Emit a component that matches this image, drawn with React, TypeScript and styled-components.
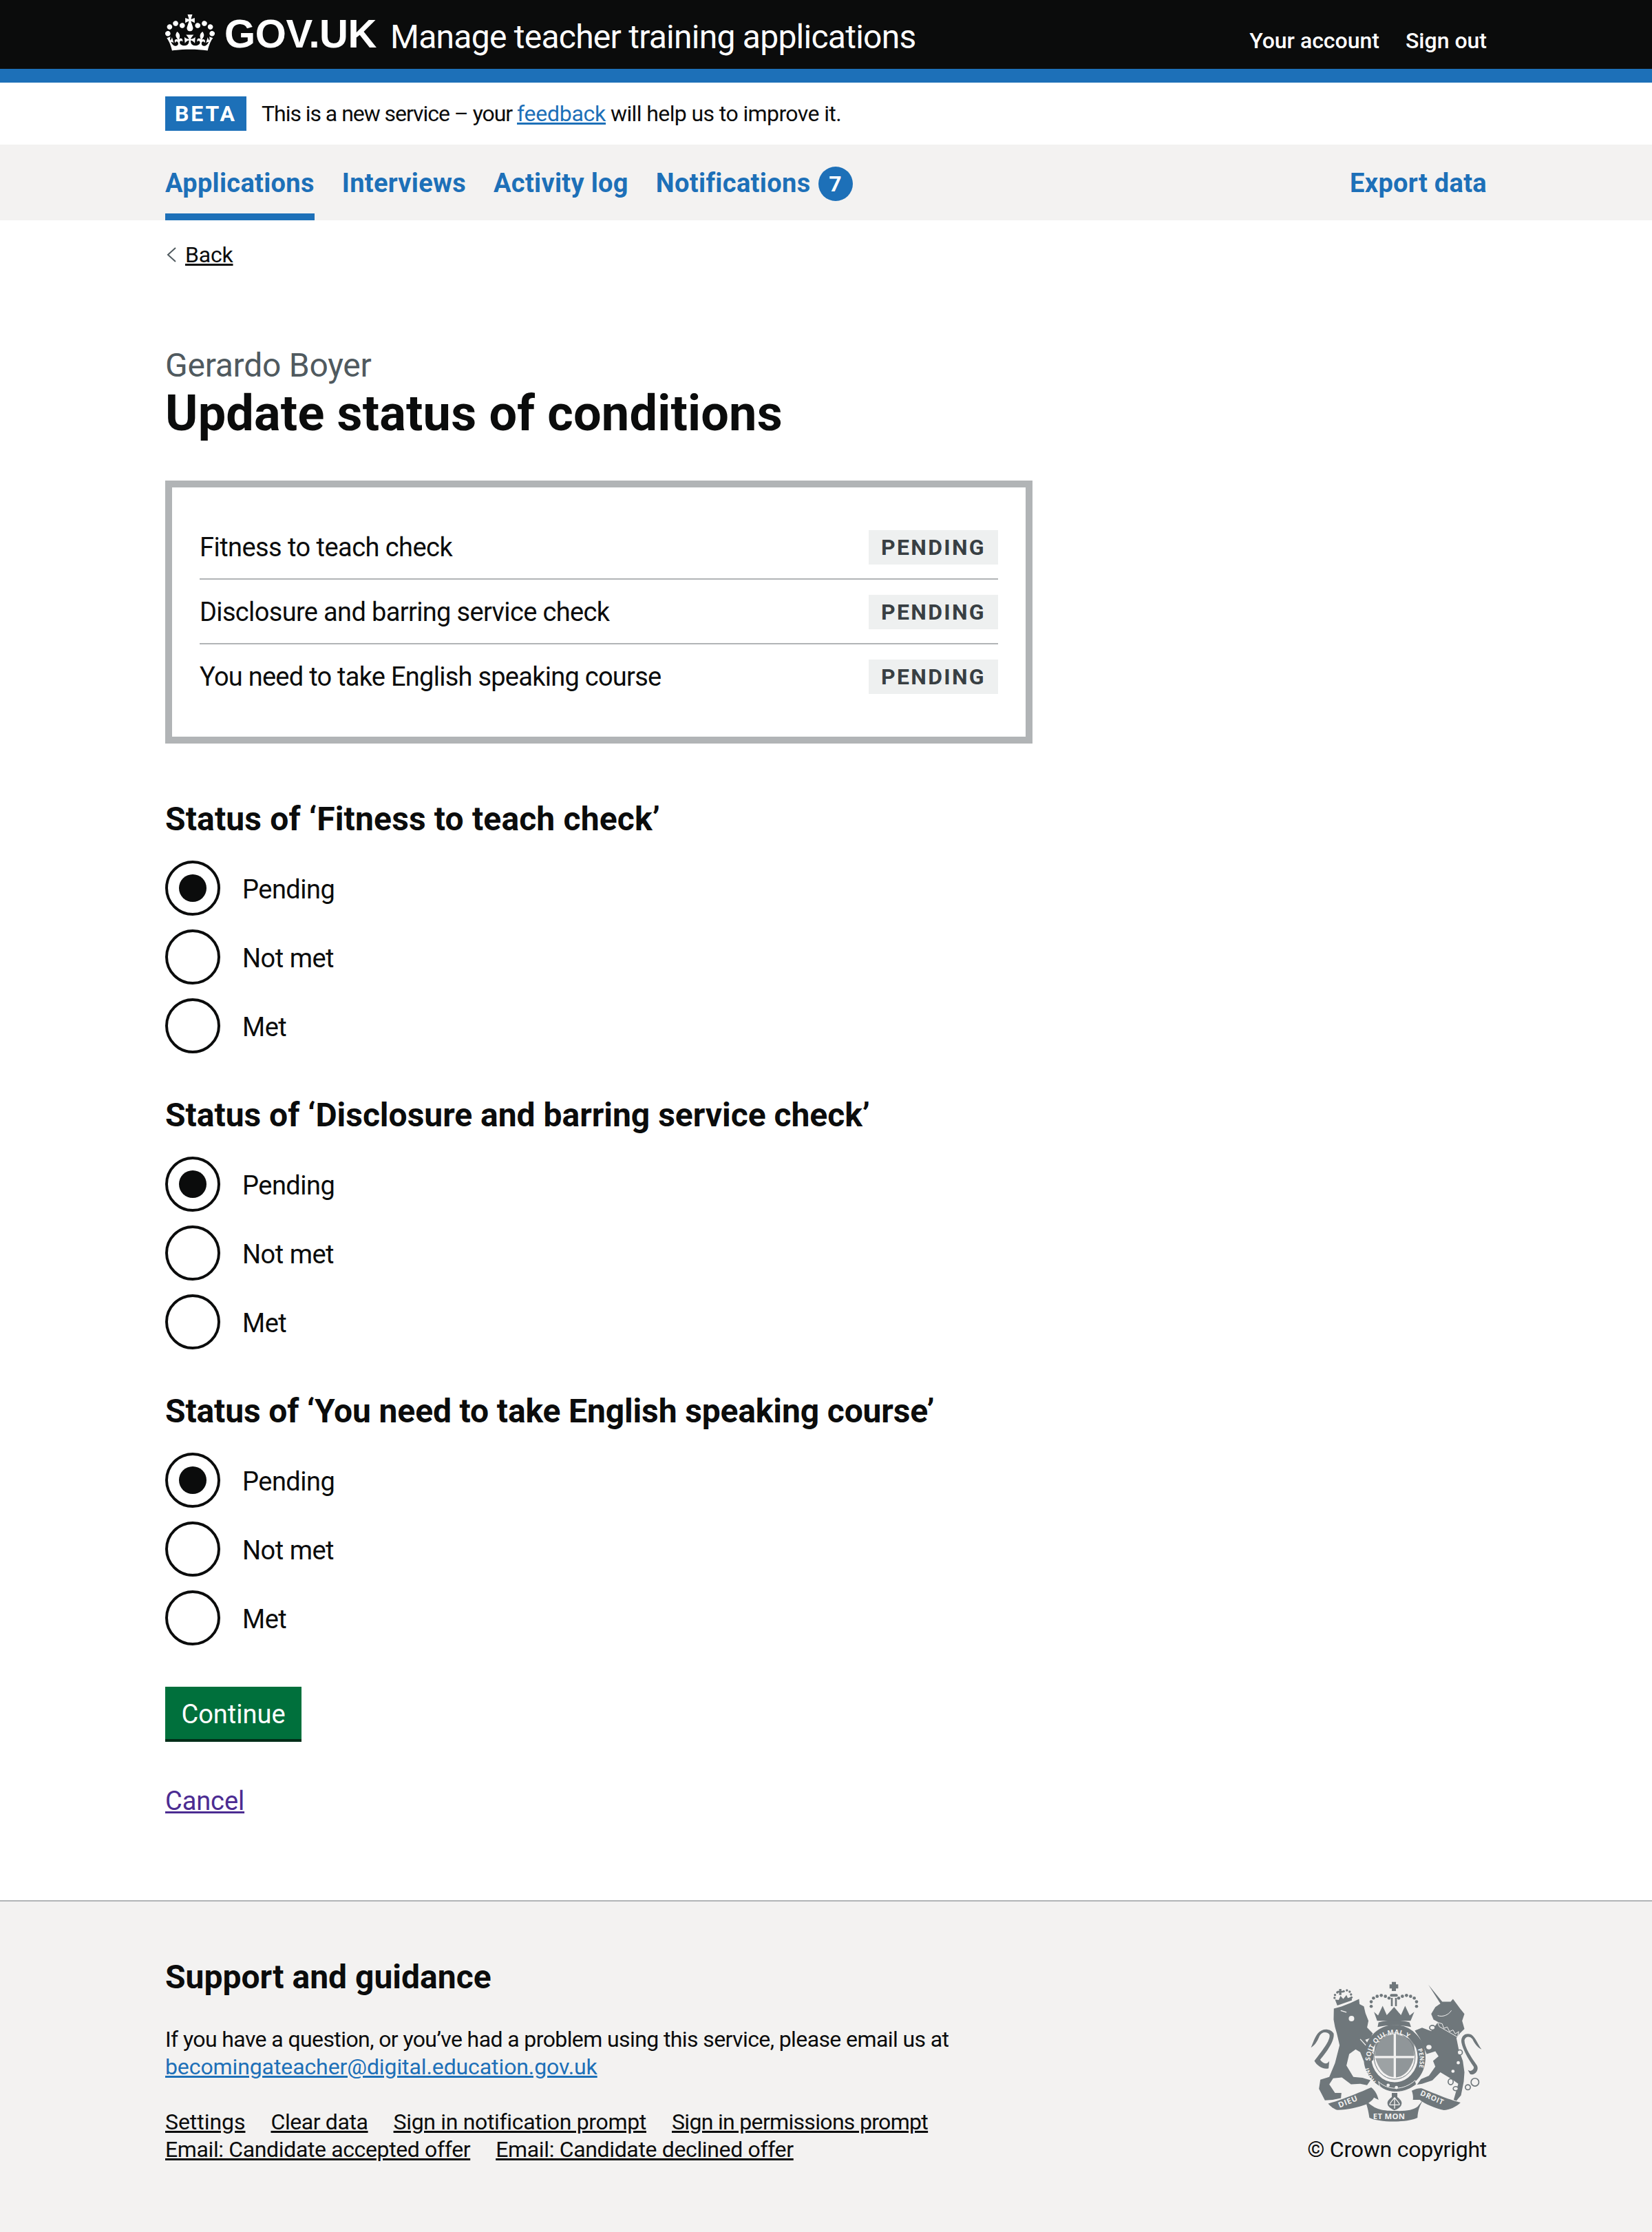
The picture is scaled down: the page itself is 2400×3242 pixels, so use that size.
import React from "react";
import styled, { createGlobalStyle } from "styled-components";

const FONT = `Roboto, "Noto Sans", Arial, sans-serif`;
const BLUE = "#1d70b8";
const INK = "#0b0c0c";
const GREY = "#f3f2f1";
const RULE = "#b1b4b6";
const ARMS = "#6f777b";

const Global = createGlobalStyle`
  html, body { margin: 0; padding: 0; background: #fff; }
  body { font-family: ${FONT}; color: ${INK}; }
  * { box-sizing: border-box; }
`;

const Wrap = styled.div`
  width: 1920px;
  margin: 0 auto;
`;
const Header = styled.header`
  background: ${INK};
  height: 120px;
  border-bottom: 20px solid ${BLUE};
  color: #fff;
`;
const HeaderRow = styled(Wrap)`
  display: flex;
  align-items: flex-start;
  justify-content: space-between;
  height: 100px;
`;
const Brand = styled.div`
  display: flex;
  align-items: flex-start;
`;
const CrownSvg = styled.svg`
  width: 72px;
  height: 53px;
  margin-top: 21px;
  fill: #fff;
  flex: none;
`;
const Logotype = styled.span`
  font-family: "Liberation Sans", Arial, sans-serif;
  font-weight: 700;
  font-size: 58px;
  line-height: 64px;
  letter-spacing: -0.4px;
  margin: 17px 0 0 14px;
`;
const ServiceName = styled.span`
  font-size: 48px;
  line-height: 60px;
  letter-spacing: -0.75px;
  margin: 24px 0 0 20px;
`;
const HeaderLinks = styled.nav`
  display: flex;
  gap: 38px;
  margin-top: 39px;
`;
const HeaderLink = styled.a`
  color: #fff;
  font-size: 32px;
  line-height: 40px;
  font-weight: 500;
  letter-spacing: 0;
`;
const PhaseBanner = styled(Wrap)`
  display: flex;
  align-items: center;
  gap: 22px;
  height: 90px;
  font-size: 32px;
`;
const BetaTag = styled.strong`
  background: ${BLUE};
  color: #fff;
  width: 118px;
  height: 50px;
  display: flex;
  align-items: center;
  justify-content: center;
  font-size: 32px;
  font-weight: 700;
  letter-spacing: 2.9px;
`;
const PhaseText = styled.span`
  letter-spacing: -1.04px;
`;
const PhaseTail = styled.span`
  letter-spacing: -0.6px;
`;
const BlueLink = styled.a`
  color: ${BLUE};
  text-decoration: underline;
`;
const FeedbackLink = styled(BlueLink)`
  letter-spacing: -0.26px;
`;
const FooterEmail = styled(BlueLink)`
  letter-spacing: -0.1px;
`;
const NavBar = styled.div`
  background: ${GREY};
  height: 110px;
`;
const NavRow = styled(Wrap)`
  display: flex;
  justify-content: space-between;
`;
const NavList = styled.nav`
  display: flex;
  gap: 40px;
`;
const NavItem = styled.a<{ $active?: boolean; $track: number }>`
  display: flex;
  align-items: center;
  gap: 11px;
  height: 110px;
  padding-top: 11px;
  border-bottom: 10px solid ${(p) => (p.$active ? BLUE : "transparent")};
  color: ${BLUE};
  font-size: 38px;
  line-height: 50px;
  font-weight: 700;
  letter-spacing: ${(p) => p.$track}px;
`;
const CountBadge = styled.span`
  width: 50px;
  height: 50px;
  margin-top: 2px;
  border-radius: 50%;
  background: ${BLUE};
  color: #fff;
  font-size: 32px;
  font-weight: 700;
  display: flex;
  align-items: center;
  justify-content: center;
  letter-spacing: 0;
`;
const BackRow = styled.div`
  display: flex;
  align-items: center;
  gap: 11px;
  margin-top: 30px;
  height: 40px;
  font-size: 32px;
  line-height: 40px;
`;
const BackLink = styled.a`
  color: ${INK};
  text-decoration: underline;
  letter-spacing: -0.2px;
`;
const Chevron = styled.svg`
  width: 18px;
  height: 24px;
  flex: none;
`;
const Caption = styled.div`
  margin-top: 113px;
  font-size: 48px;
  line-height: 56px;
  color: #505a5f;
  letter-spacing: -0.25px;
`;
const Title = styled.h1`
  margin: 0 0 55px;
  font-size: 72px;
  line-height: 84px;
  font-weight: 700;
  letter-spacing: 0.2px;
`;
const Inset = styled.div`
  width: 1260px;
  border: 10px solid ${RULE};
  padding: 40px;
  margin-bottom: 80px;
`;
const ConditionRow = styled.div<{ $last?: boolean; $track: number }>`
  display: flex;
  align-items: center;
  justify-content: space-between;
  padding: 22px 0 20px;
  border-bottom: 2px solid ${(p) => (p.$last ? "transparent" : RULE)};
  font-size: 38px;
  line-height: 44px;
  letter-spacing: ${(p) => p.$track}px;
`;
const StatusTag = styled.strong`
  width: 188px;
  height: 50px;
  display: flex;
  align-items: center;
  justify-content: center;
  background: #eef0f0;
  color: #383f43;
  font-size: 32px;
  font-weight: 700;
  letter-spacing: 2.3px;
`;
const Fieldset = styled.fieldset`
  border: 0;
  margin: 0 0 60px;
  padding: 0;
`;
const Legend = styled.legend<{ $track: number }>`
  padding: 0;
  margin-bottom: 30px;
  font-size: 48px;
  line-height: 60px;
  font-weight: 700;
  letter-spacing: ${(p) => p.$track}px;
`;
const RadioList = styled.div`
  display: flex;
  flex-direction: column;
  gap: 20px;
`;
const RadioRow = styled.label`
  display: flex;
  align-items: center;
  gap: 32px;
  height: 80px;
  font-size: 38px;
  letter-spacing: -0.5px;
`;
const RadioText = styled.span`
  margin-top: 3px;
`;
const RadioMark = styled.span<{ $on?: boolean }>`
  width: 80px;
  height: 80px;
  border: 4px solid ${INK};
  border-radius: 50%;
  display: flex;
  align-items: center;
  justify-content: center;
  flex: none;
  &::after {
    content: "";
    width: 40px;
    height: 40px;
    border-radius: 50%;
    background: ${(p) => (p.$on ? INK : "transparent")};
  }
`;
const ContinueButton = styled.button`
  display: block;
  width: 198px;
  height: 80px;
  padding: 0;
  background: #00703c;
  border: 0;
  box-shadow: inset 0 -4px 0 #002d18;
  color: #fff;
  font-family: ${FONT};
  font-size: 38px;
  letter-spacing: 0;
`;
const CancelLink = styled.a`
  display: block;
  width: fit-content;
  margin: 61px 0 119px;
  font-size: 38px;
  line-height: 50px;
  color: #4c2c92;
  text-decoration: underline;
  letter-spacing: -0.1px;
`;
const Footer = styled.footer`
  background: ${GREY};
  border-top: 2px solid ${RULE};
  padding: 80px 0 100px;
`;
const FooterRow = styled(Wrap)`
  display: flex;
  justify-content: space-between;
`;
const FooterMain = styled.div`
  display: flex;
  flex-direction: column;
`;
const FooterHeading = styled.h2`
  margin: 0 0 40px;
  font-size: 48px;
  line-height: 60px;
  font-weight: 700;
  letter-spacing: 0;
`;
const FooterText = styled.p`
  margin: 0 0 40px;
  font-size: 32px;
  line-height: 40px;
  letter-spacing: -0.6px;
`;
const FooterLinks = styled.div`
  display: flex;
  flex-wrap: wrap;
  column-gap: 37px;
  width: 1200px;
  font-size: 32px;
  line-height: 40px;
`;
const FooterLink = styled.a<{ $track: number }>`
  color: ${INK};
  text-decoration: underline;
  letter-spacing: ${(p) => p.$track}px;
`;
const LineBreak = styled.span`
  flex-basis: 100%;
  height: 0;
`;
const FooterAside = styled.div`
  display: flex;
  flex-direction: column;
  align-items: flex-end;
  justify-content: flex-end;
`;
const ArmsSvg = styled.svg`
  width: 252px;
  height: 207px;
  margin: 0 6px 18px 0;
`;
const Copyright = styled.div`
  font-size: 32px;
  line-height: 40px;
  letter-spacing: -0.25px;
`;

const crownPath =
  "M25 30.2c3.5 1.5 7.7-.2 9.1-3.7 1.5-3.6-.2-7.8-3.9-9.2-3.6-1.4-7.6.3-9.1 3.9-1.4 3.5.3 7.5 3.9 9zM9 39.5c3.6 1.5 7.8-.2 9.2-3.7 1.5-3.6-.2-7.8-3.9-9.1-3.6-1.5-7.6.2-9.1 3.8-1.4 3.5.3 7.5 3.8 9zM4.4 57.2c3.5 1.5 7.7-.2 9.1-3.8 1.5-3.6-.2-7.7-3.9-9.1-3.5-1.5-7.6.3-9.1 3.8-1.4 3.5.3 7.6 3.9 9.1zm38.3-21.4c3.5 1.5 7.7-.2 9.1-3.8 1.5-3.6-.2-7.7-3.9-9.1-3.6-1.5-7.6.3-9.1 3.8-1.3 3.6.4 7.7 3.9 9.1zm64.4-5.6c-3.6 1.5-7.8-.2-9.1-3.7-1.5-3.6.2-7.8 3.8-9.2 3.6-1.4 7.7.3 9.2 3.9 1.3 3.5-.4 7.5-3.9 9zm15.9 9.3c-3.6 1.5-7.7-.2-9.1-3.7-1.5-3.6.2-7.8 3.7-9.1 3.6-1.5 7.7.2 9.2 3.8 1.5 3.5-.3 7.5-3.8 9zm4.7 17.7c-3.6 1.5-7.8-.2-9.2-3.8-1.5-3.6.2-7.7 3.9-9.1 3.6-1.5 7.7.3 9.2 3.8 1.3 3.5-.4 7.6-3.9 9.1zM89.3 35.8c-3.6 1.5-7.8-.2-9.2-3.8-1.4-3.6.2-7.7 3.9-9.1 3.6-1.5 7.7.3 9.2 3.8 1.4 3.6-.3 7.7-3.9 9.1zM69.7 17.7l8.9 4.7V9.3l-8.9 2.8c-.2-.3-.5-.6-.9-.9L72.4 0H59.6l3.5 11.2c-.3.3-.6.5-.9.9l-8.8-2.8v13.1l8.8-4.7c.3.3.6.7.9.9l-5 15.4v.1c-.2.8-.4 1.6-.4 2.4 0 4.1 3.1 7.5 7 8.1h.2c.3 0 .7.1 1 .1.4 0 .7 0 1-.1h.2c4-.6 7.1-4.1 7.1-8.1 0-.8-.1-1.7-.4-2.4V34l-5.1-15.4c.4-.2.7-.6 1-.9zM66 92.8c16.9 0 32.8 1.1 47.1 3.2 4-16.9 8.9-26.7 14-33.5l-9.6-3.4c1 4.9 1.1 7.2 0 10.2-1.5-1.4-3-4.3-4.2-8.7L108.6 76c2.8-2 5-3.2 7.5-3.3-4.4 9.4-10 11.9-13.6 11.2-4.3-.8-6.3-4.6-5.6-7.9 1-4.7 5.7-5.9 8-.5 4.3-8.7-3-11.4-7.6-8.8 7.1-7.2 7.9-13.5 2.1-21.1-8 6.1-8.1 12.3-4.5 20.8-4.7-5.4-12.1-2.5-9.5 6.2 3.4-5.2 7.9-2 7.2 3.1-.6 4.3-6.4 7.8-13.5 7.2-10.3-.9-10.9-8-11.2-13.8 2.5-.5 7.1 1.8 11 7.3L80.2 60c-4.1 4.4-8 5.3-12.3 5.4 1.4-4.4 8-11.6 8-11.6H55.5s6.4 7.2 7.9 11.6c-4.2-.1-8-1-12.3-5.4l1.4 16.4c3.9-5.5 8.5-7.7 10.9-7.3-.3 5.8-.9 12.8-11.1 13.8-7.2.6-12.9-2.9-13.5-7.2-.7-5 3.8-8.3 7.1-3.1 2.7-8.7-4.6-11.6-9.4-6.2 3.7-8.5 3.6-14.7-4.6-20.8-5.8 7.6-5 13.9 2.2 21.1-4.7-2.6-11.9.1-7.7 8.8 2.3-5.5 7.1-4.2 8.1.5.7 3.3-1.3 7.1-5.7 7.9-3.5.7-9-1.8-13.5-11.2 2.5.1 4.7 1.3 7.5 3.3l-4.7-15.4c-1.2 4.4-2.7 7.2-4.3 8.7-1.1-3-.9-5.3 0-10.2l-9.5 3.4c5 6.9 9.9 16.7 14 33.5 14.8-2.1 30.8-3.2 47.7-3.2z";

const pearls: [number, number][] = [
  [578, 282], [578, 262], [588, 246], [604, 238], [622, 234], [640, 238], [656, 246],
  [698, 246], [714, 238], [732, 234], [750, 238], [766, 246], [776, 262], [776, 282],
];
const lionPearls: [number, number][] = [
  [418, 245], [420, 232], [430, 221], [458, 216], [472, 212], [484, 218], [490, 230], [492, 243],
];
const chains: [number, number, number, number][] = [
  [845, 375, 12, 10], [830, 460, 14, 12], [965, 483, 11, 11], [925, 611, 11, 13],
  [947, 641, 11, 9], [1000, 635, 11, 11], [1031, 613, 17, 17],
];

const Crest = () => (
  <ArmsSvg viewBox="308 170 756 622" aria-label="Royal coat of arms">
    {/* lion */}
    <g fill={ARMS}>
      <path d="M415 292 L448 283 L490 266 L525 250 L527 272 L546 282 L553 312 L566 345 L560 374 L585 400 L575 420 L552 428 L590 486 L587 516 L570 527 L545 520 L530 482 L510 470 L482 490 L470 540 L500 590 L540 594 L575 604 L560 626 L530 620 L490 622 L450 592 L412 596 L395 622 L420 660 L448 660 L446 682 L410 690 L376 692 L350 642 L356 602 L395 590 L420 530 L440 452 L428 400 L420 372 L414 340 Z" />
      <path d="M315 462 C325 440 330 420 345 400 C365 375 400 378 414 400 C420 430 385 480 355 515 C365 530 385 540 395 520 L392 552 C370 560 340 540 330 520 C360 480 402 430 396 405 C385 390 360 392 352 412 C345 430 335 450 315 462 Z" />
      {lionPearls.map(([x, y]) => (
        <circle key={`${x}-${y}`} cx={x} cy={y} r="5" />
      ))}
      <path d="M438 206 H448 V214 H456 V222 H448 V232 H438 V222 H430 V214 H438 Z" />
      <path d="M420 252 L436 254 L444 236 L456 250 L470 232 L476 246 L492 240 L494 256 L430 278 Z" />
    </g>
    <circle cx="492" cy="335" r="12" fill={GREY} />
    <path d="M445 300 L470 308 M530 425 L590 490" stroke={GREY} strokeWidth="4" fill="none" />
    {/* unicorn */}
    <g fill={ARMS}>
      <path d="M828 188 L888 262 L925 262 L935 250 L965 290 L985 315 L975 345 L985 380 L965 400 L950 420 L960 470 L978 520 L985 570 L982 610 L970 670 L950 694 L938 690 L958 620 L930 600 L880 570 L845 605 L800 620 L778 624 L795 600 L830 585 L858 545 L848 520 L872 500 L858 478 L820 490 L790 420 L768 388 L800 375 L840 390 L870 350 L850 340 L840 315 L858 285 L880 270 Z" />
      <path d="M1060 470 C1045 450 1035 420 1015 405 C990 395 968 410 972 440 C978 470 1000 510 1025 545 C1030 555 1015 570 1000 560 L1010 578 C1030 585 1050 560 1040 540 C1015 505 985 460 985 430 C990 410 1010 412 1020 425 C1030 445 1040 460 1060 470 Z" />
    </g>
    <path d="M868 352 L875 370 L955 416 L960 392 L945 402 L935 385 L920 392 L910 372 L895 378 L888 358 Z" fill={ARMS} stroke={GREY} strokeWidth="3" />
    <path d="M868 322 C890 330 915 320 928 300" stroke={GREY} strokeWidth="3" fill="none" />
    <circle cx="935" cy="565" r="7" fill={GREY} />
    <circle cx="958" cy="528" r="7" fill={GREY} />
    {chains.map(([x, y, rx, ry]) => (
      <ellipse key={`${x}-${y}`} cx={x} cy={y} rx={rx} ry={ry} fill={GREY} stroke={ARMS} strokeWidth="5" />
    ))}
    {/* crown */}
    <g fill={ARMS}>
      <path d="M668 175 H686 V186 H696 V204 H686 V215 H668 V204 H658 V186 H668 Z" />
      <rect x="660" y="228" width="34" height="12" rx="6" />
      <rect x="664" y="245" width="8" height="36" />
      <rect x="682" y="245" width="8" height="36" />
      <path d="M590 306 L608 322 L628 280 L646 320 L678 285 L708 320 L726 280 L746 322 L766 306 L750 345 L604 345 Z" />
      <path d="M610 352 C650 340 705 340 745 352 L752 372 C705 362 650 362 606 372 Z" />
      {pearls.map(([x, y]) => (
        <circle key={`${x}-${y}`} cx={x} cy={y} r="7" />
      ))}
    </g>
    {/* shield ring */}
    <ellipse cx="680" cy="505" rx="118" ry="125" fill="none" stroke={ARMS} strokeWidth="34" />
    <ellipse cx="680" cy="500" rx="90" ry="100" fill={GREY} stroke={ARMS} strokeWidth="3" />
    <g fill={ARMS}>
      <path d="M594 498 V440 C610 420 650 408 676 404 V498 Z" opacity="0.75" />
      <path d="M686 404 C712 408 750 420 766 440 V498 H686 Z" opacity="0.75" />
      <path d="M596 508 H676 V590 C650 590 615 570 596 508 Z" opacity="0.65" />
      <path d="M686 508 H764 C748 570 712 590 686 592 Z" opacity="0.75" />
    </g>
    <path id="ringPath" d="M574 520 A108 116 0 0 1 790 520" fill="none" />
    <text fontFamily="'Open Sans', sans-serif" fontWeight="700" fontSize="29" fill={GREY} letterSpacing="1">
      <textPath href="#ringPath">SOIT QUI MAL Y</textPath>
    </text>
    <path id="ringRight" d="M770 450 A108 116 0 0 1 745 612" fill="none" />
    <text fontFamily="'Open Sans', sans-serif" fontWeight="700" fontSize="26" fill={GREY}>
      <textPath href="#ringRight" startOffset="22">PENSE</textPath>
    </text>
    <path id="ringLeft" d="M600 610 A108 116 0 0 1 565 535" fill="none" />
    <text fontFamily="'Open Sans', sans-serif" fontWeight="700" fontSize="26" fill={GREY}>
      <textPath href="#ringLeft">HONI</textPath>
    </text>
    <path d="M610 610 C650 650 720 650 770 605 L775 622 C725 665 650 665 615 630 Z" fill={ARMS} stroke={GREY} strokeWidth="3" />
    <circle cx="652" cy="626" r="7" fill={GREY} />
    <circle cx="688" cy="636" r="7" fill={GREY} />
    {/* ribbons */}
    <g fill={ARMS}>
      <path d="M390 706 C420 700 500 670 578 636 C596 650 605 668 610 690 L590 680 C585 690 575 700 555 710 C520 722 470 735 430 734 C415 730 400 718 390 706 Z" />
      <path d="M552 690 C560 720 566 735 570 768 C610 790 740 790 780 768 C782 735 790 715 805 690 L780 720 C760 735 730 740 680 738 C620 738 590 730 552 690 Z" />
      <path d="M755 650 C775 640 790 638 800 640 C850 660 920 690 968 702 C950 720 920 735 895 735 C860 728 810 708 790 690 L760 690 C762 676 760 664 755 650 Z" />
    </g>
    <path d="M668 660 H692 V678 C708 690 716 700 708 716 C696 730 690 730 680 736 C670 730 664 730 652 716 C644 700 652 690 668 678 Z" fill={ARMS} />
    <path d="M680 680 C670 695 660 700 658 712 M680 680 C690 695 700 700 702 712 M680 680 V728 M660 712 H700" stroke={GREY} strokeWidth="4" fill="none" />
    <g fontFamily="'Open Sans', sans-serif" fontWeight="700" fill={GREY}>
      <text x="440" y="725" fontSize="34" transform="rotate(-22 440 725)" letterSpacing="2">DIEU</text>
      <text x="586" y="773" fontSize="34" letterSpacing="1">ET MON</text>
      <text x="790" y="668" fontSize="32" transform="rotate(24 790 668)" letterSpacing="2">DROIT</text>
    </g>
  </ArmsSvg>
);

const conditions = [
  { text: "Fitness to teach check", row: -0.55, legend: 0.15 },
  { text: "Disclosure and barring service check", row: -0.65, legend: -0.02 },
  { text: "You need to take English speaking course", row: -0.74, legend: -0.14 },
];
const options = ["Pending", "Not met", "Met"];

export default function App() {
  return (
    <>
      <Global />
      <Header>
        <HeaderRow>
          <Brand>
            <CrownSvg viewBox="0 0 132 97" aria-hidden="true">
              <path fillRule="evenodd" d={crownPath} />
            </CrownSvg>
            <Logotype>GOV.UK</Logotype>
            <ServiceName>Manage teacher training applications</ServiceName>
          </Brand>
          <HeaderLinks>
            <HeaderLink>Your account</HeaderLink>
            <HeaderLink>Sign out</HeaderLink>
          </HeaderLinks>
        </HeaderRow>
      </Header>
      <PhaseBanner>
        <BetaTag>BETA</BetaTag>
        <PhaseText>
          This is a new service – your <FeedbackLink>feedback</FeedbackLink>{" "}
          <PhaseTail>will help us to improve it.</PhaseTail>
        </PhaseText>
      </PhaseBanner>
      <NavBar>
        <NavRow>
          <NavList>
            <NavItem $active $track={0.3}>Applications</NavItem>
            <NavItem $track={0.3}>Interviews</NavItem>
            <NavItem $track={0.3}>Activity log</NavItem>
            <NavItem $track={0.35}>
              Notifications <CountBadge>7</CountBadge>
            </NavItem>
          </NavList>
          <NavItem $track={0.3}>Export data</NavItem>
        </NavRow>
      </NavBar>
      <Wrap>
        <BackRow>
          <Chevron viewBox="0 0 18 24" aria-hidden="true">
            <path d="M15 2 L4 12 L15 22" fill="none" stroke="#505a5f" strokeWidth="2" />
          </Chevron>
          <BackLink>Back</BackLink>
        </BackRow>
        <Caption>Gerardo Boyer</Caption>
        <Title>Update status of conditions</Title>
        <Inset>
          {conditions.map((c, i) => (
            <ConditionRow key={c.text} $track={c.row} $last={i === conditions.length - 1}>
              {c.text}
              <StatusTag>PENDING</StatusTag>
            </ConditionRow>
          ))}
        </Inset>
        {conditions.map((c) => (
          <Fieldset key={c.text}>
            <Legend $track={c.legend}>Status of ‘{c.text}’</Legend>
            <RadioList>
              {options.map((o, i) => (
                <RadioRow key={o}>
                  <RadioMark $on={i === 0} />
                  <RadioText>{o}</RadioText>
                </RadioRow>
              ))}
            </RadioList>
          </Fieldset>
        ))}
        <ContinueButton>Continue</ContinueButton>
        <CancelLink>Cancel</CancelLink>
      </Wrap>
      <Footer>
        <FooterRow>
          <FooterMain>
            <FooterHeading>Support and guidance</FooterHeading>
            <FooterText>
              If you have a question, or you’ve had a problem using this service, please email us at
              <br />
              <FooterEmail>becomingateacher@digital.education.gov.uk</FooterEmail>
            </FooterText>
            <FooterLinks>
              <FooterLink $track={-0.05}>Settings</FooterLink>
              <FooterLink $track={-0.4}>Clear data</FooterLink>
              <FooterLink $track={-0.33}>Sign in notification prompt</FooterLink>
              <FooterLink $track={-0.68}>Sign in permissions prompt</FooterLink>
              <LineBreak />
              <FooterLink $track={-0.37}>Email: Candidate accepted offer</FooterLink>
              <FooterLink $track={-0.35}>Email: Candidate declined offer</FooterLink>
            </FooterLinks>
          </FooterMain>
          <FooterAside>
            <Crest />
            <Copyright>© Crown copyright</Copyright>
          </FooterAside>
        </FooterRow>
      </Footer>
    </>
  );
}
